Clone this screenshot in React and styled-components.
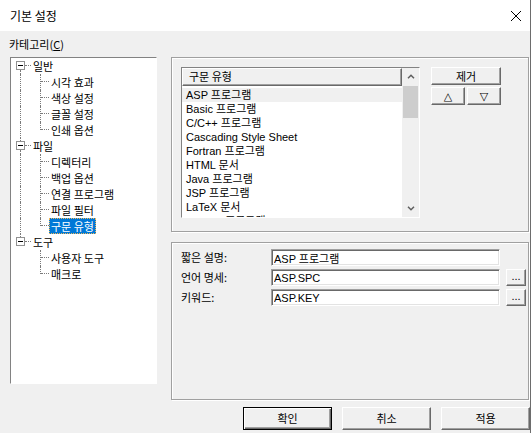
import React from 'react';
import styled, { createGlobalStyle, css } from 'styled-components';

const GlobalStyle = createGlobalStyle`
  html, body { margin: 0; padding: 0; background: #fff; }
  body {
    font-family: "Liberation Sans", "Noto Sans CJK KR", sans-serif;
    font-size: 11px;
    color: #000;
  }
  * { box-sizing: border-box; }
`;

const KR = `"Noto Sans CJK KR", "Liberation Sans", sans-serif`;

const Window = styled.div`
  width: 531px;
  height: 433px;
  overflow: hidden;
  background: #f0f0f0;
  border-right: 1px solid #6d6d6d;
  display: flex;
  flex-direction: column;
`;

const TitleBar = styled.div`
  height: 31px;
  flex: none;
  background: #fff;
  display: flex;
  align-items: center;
  justify-content: space-between;
  padding: 0 9px 0 10px;
  font-family: ${KR};
  font-size: 12px;
  line-height: 16px;
`;

const Body = styled.div`
  flex: 1;
  display: flex;
  flex-direction: column;
  padding: 6px 0 0 10px;
`;

const CategoryLabel = styled.div`
  height: 14px;
  line-height: 14px;
  margin: 0 0 6px -1px;
  font-family: ${KR};
  font-size: 11px;
`;

const Content = styled.div`
  display: flex;
  gap: 14px;
  align-items: flex-start;
`;

/* ---------- tree ---------- */

const Tree = styled.div`
  width: 147px;
  height: 327px;
  background: #fff;
  border: 1px solid;
  border-color: #828282 #fff #fff #828282;
`;

const TreeRow = styled.div`
  display: flex;
  height: 16px;
`;

const Gutter = styled.span`
  position: relative;
  flex: none;
  width: ${p => p.$w}px;
  height: 16px;
`;

const VLine = styled.i`
  position: absolute;
  left: 9px;
  top: ${p => p.$from}px;
  height: ${p => p.$to - p.$from}px;
  border-left: 1px dotted #7a7a7a;
`;

const HLine = styled.i`
  position: absolute;
  top: 7px;
  left: ${p => p.$left}px;
  width: ${p => p.$w}px;
  border-top: 1px dotted #7a7a7a;
`;

const ExpandBox = styled.i`
  position: absolute;
  left: 5px;
  top: 3px;
  width: 9px;
  height: 9px;
  border: 1px solid #919191;
  background: #fff;
  &::after {
    content: '';
    position: absolute;
    left: 1px;
    top: 3px;
    width: 5px;
    height: 1px;
    background: #000;
  }
`;

const NodeLabel = styled.span`
  height: 16px;
  line-height: 14px;
  padding: 0 1px;
  border: 1px solid transparent;
  font-family: ${KR};
  font-size: 11px;
  white-space: nowrap;
  ${p => p.$selected && css`
    background: #0078d7;
    color: #fff;
    border: 1px dotted #f0b85a;
  `}
`;

/* ---------- right side ---------- */

const RightCol = styled.div`
  width: 358px;
  display: flex;
  flex-direction: column;
  gap: 10px;
`;

const Group = styled.div`
  height: ${p => p.$h}px;
  border: 1px solid #a0a0a0;
  box-shadow: inset 1px 1px 0 #fff, 1px 1px 0 #fff;
`;

const TypesGroup = styled(Group)`
  display: flex;
  gap: 11px;
  padding: 9px 0 0 9px;
`;

const ListView = styled.div`
  width: 239px;
  height: 151px;
  display: flex;
  background: #fff;
  border: 1px solid;
  border-color: #828282 #fff #fff #828282;
`;

const ListMain = styled.div`
  flex: 1;
  display: flex;
  flex-direction: column;
  overflow: hidden;
`;

const ColumnHeader = styled.div`
  height: 18px;
  flex: none;
  padding-left: 6px;
  line-height: 15px;
  background: #f0f0f0;
  border: 1px solid;
  border-color: #fff #696969 #696969 #fff;
  box-shadow: inset -1px -1px 0 #a0a0a0;
  font-family: ${KR};
`;

const Rows = styled.div`
  padding-top: 2px;
`;

const ListRow = styled.div`
  height: 14px;
  line-height: 14px;
  padding-left: 4px;
  white-space: nowrap;
  background: ${p => (p.$selected ? '#f0f0f0' : 'transparent')};
`;

const ScrollBar = styled.div`
  width: 17px;
  flex: none;
  background: #f0f0f0;
  display: flex;
  flex-direction: column;
`;

const ScrollArrow = styled.div`
  height: 17px;
  flex: none;
  display: flex;
  align-items: center;
  justify-content: center;
`;

const ScrollTrack = styled.div`
  flex: 1;
  padding: 1px 1px 0 1px;
`;

const ScrollThumb = styled.div`
  height: 32px;
  background: #cdcdcd;
`;

const SideButtons = styled.div`
  width: 70px;
  display: flex;
  flex-direction: column;
  gap: 2px;
`;

const ArrowRow = styled.div`
  display: flex;
  gap: 2px;
`;

const Btn = styled.button`
  width: ${p => p.$w}px;
  height: ${p => p.$h}px;
  flex: none;
  margin: 0;
  padding: 0;
  font-family: ${p => (p.$glyph ? '"DejaVu Sans", sans-serif' : KR)};
  font-size: 11px;
  line-height: 1;
  color: #000;
  background: #f0f0f0;
  border: 1px solid;
  border-color: #fff #696969 #696969 #fff;
  box-shadow: inset -1px -1px 0 #a0a0a0;
  display: flex;
  align-items: center;
  justify-content: center;
  ${p => p.$default && css`
    border-color: #000;
    box-shadow: inset 1px 1px 0 #fff, inset -1px -1px 0 #696969, inset -2px -2px 0 #a0a0a0;
  `}
`;

const FieldsGroup = styled(Group)`
  display: flex;
  flex-direction: column;
  gap: 3px;
  padding: 6px 0 0 9px;
`;

const FieldRow = styled.div`
  display: flex;
  align-items: center;
  height: 17px;
`;

const FieldLabel = styled.span`
  width: 90px;
  flex: none;
  font-family: ${KR};
  font-size: 11px;
  line-height: 17px;
`;

const TextBox = styled.input`
  width: 229px;
  height: 17px;
  margin: 0;
  padding: 0 2px;
  font-family: "Liberation Sans", "Noto Sans CJK KR", sans-serif;
  font-size: 11px;
  color: #000;
  background: #fff;
  border: 1px solid;
  border-color: #a0a0a0 #fff #fff #a0a0a0;
  box-shadow: inset 1px 1px 0 #696969, inset -1px -1px 0 #e3e3e3;
  outline: none;
`;

const BrowseBtn = styled(Btn)`
  margin-left: 6px;
  align-items: flex-end;
  padding-bottom: 3px;
  font-family: "Liberation Sans", sans-serif;
`;

const Footer = styled.div`
  display: flex;
  justify-content: flex-end;
  gap: 10px;
  margin-top: 7px;
`;

/* ---------- data ---------- */

const treeData = [
  { label: '일반', children: ['시각 효과', '색상 설정', '글꼴 설정', '인쇄 옵션'] },
  { label: '파일', children: ['디렉터리', '백업 옵션', '연결 프로그램', '파일 필터', '구문 유형'] },
  { label: '도구', children: ['사용자 도구', '매크로'] },
];

const selectedNode = '구문 유형';

const syntaxTypes = [
  'ASP 프로그램',
  'Basic 프로그램',
  'C/C++ 프로그램',
  'Cascading Style Sheet',
  'Fortran 프로그램',
  'HTML 문서',
  'Java 프로그램',
  'JSP 프로그램',
  'LaTeX 문서',
  'Modula 프로그램',
];

const fields = [
  { label: '짧은 설명:', value: 'ASP 프로그램', browse: false },
  { label: '언어 명세:', value: 'ASP.SPC', browse: true },
  { label: '키워드:', value: 'ASP.KEY', browse: true },
];

const Chevron = ({ down }) => (
  <svg width="8" height="5" viewBox="0 0 8 5">
    <path
      d={down ? 'M1 0.8 L4 3.8 L7 0.8' : 'M1 4.2 L4 1.2 L7 4.2'}
      fill="none"
      stroke="#606060"
      strokeWidth="1.5"
    />
  </svg>
);

const CloseIcon = () => (
  <svg width="10" height="10" viewBox="0 0 10 10">
    <path d="M0 0 L10 10 M10 0 L0 10" stroke="#000" strokeWidth="1" />
  </svg>
);

function CategoryTree() {
  const rows = [];
  treeData.forEach((node, i) => {
    const first = i === 0;
    const last = i === treeData.length - 1;
    rows.push(
      <TreeRow key={node.label}>
        <Gutter $w={20}>
          {!first && <VLine $from={0} $to={3} />}
          {!last && <VLine $from={12} $to={16} />}
          <HLine $left={14} $w={6} />
          <ExpandBox />
        </Gutter>
        <NodeLabel>{node.label}</NodeLabel>
      </TreeRow>
    );
    node.children.forEach((child, j) => {
      const lastChild = j === node.children.length - 1;
      rows.push(
        <TreeRow key={node.label + child}>
          <Gutter $w={20}>{!last && <VLine $from={0} $to={16} />}</Gutter>
          <Gutter $w={18}>
            <VLine $from={0} $to={lastChild ? 8 : 16} />
            <HLine $left={10} $w={8} />
          </Gutter>
          <NodeLabel $selected={child === selectedNode}>{child}</NodeLabel>
        </TreeRow>
      );
    });
  });
  return <Tree>{rows}</Tree>;
}

export default function App() {
  return (
    <>
      <GlobalStyle />
      <Window>
        <TitleBar>
          <span>기본 설정</span>
          <CloseIcon />
        </TitleBar>
        <Body>
          <CategoryLabel>
            카테고리(<u>C</u>)
          </CategoryLabel>
          <Content>
            <CategoryTree />
            <RightCol>
              <TypesGroup $h={175}>
                <ListView>
                  <ListMain>
                    <ColumnHeader>구문 유형</ColumnHeader>
                    <Rows>
                      {syntaxTypes.map((t, i) => (
                        <ListRow key={t} $selected={i === 0}>
                          {t}
                        </ListRow>
                      ))}
                    </Rows>
                  </ListMain>
                  <ScrollBar>
                    <ScrollArrow>
                      <Chevron />
                    </ScrollArrow>
                    <ScrollTrack>
                      <ScrollThumb />
                    </ScrollTrack>
                    <ScrollArrow>
                      <Chevron down />
                    </ScrollArrow>
                  </ScrollBar>
                </ListView>
                <SideButtons>
                  <Btn $w={70} $h={18}>제거</Btn>
                  <ArrowRow>
                    <Btn $w={34} $h={18} $glyph>△</Btn>
                    <Btn $w={34} $h={18} $glyph>▽</Btn>
                  </ArrowRow>
                </SideButtons>
              </TypesGroup>
              <FieldsGroup $h={158}>
                {fields.map(f => (
                  <FieldRow key={f.label}>
                    <FieldLabel>{f.label}</FieldLabel>
                    <TextBox readOnly value={f.value} />
                    {f.browse && <BrowseBtn $w={20} $h={17}>...</BrowseBtn>}
                  </FieldRow>
                ))}
              </FieldsGroup>
            </RightCol>
          </Content>
          <Footer>
            <Btn $w={89} $h={23} $default>확인</Btn>
            <Btn $w={89} $h={23}>취소</Btn>
            <Btn $w={89} $h={23}>적용</Btn>
          </Footer>
        </Body>
      </Window>
    </>
  );
}
